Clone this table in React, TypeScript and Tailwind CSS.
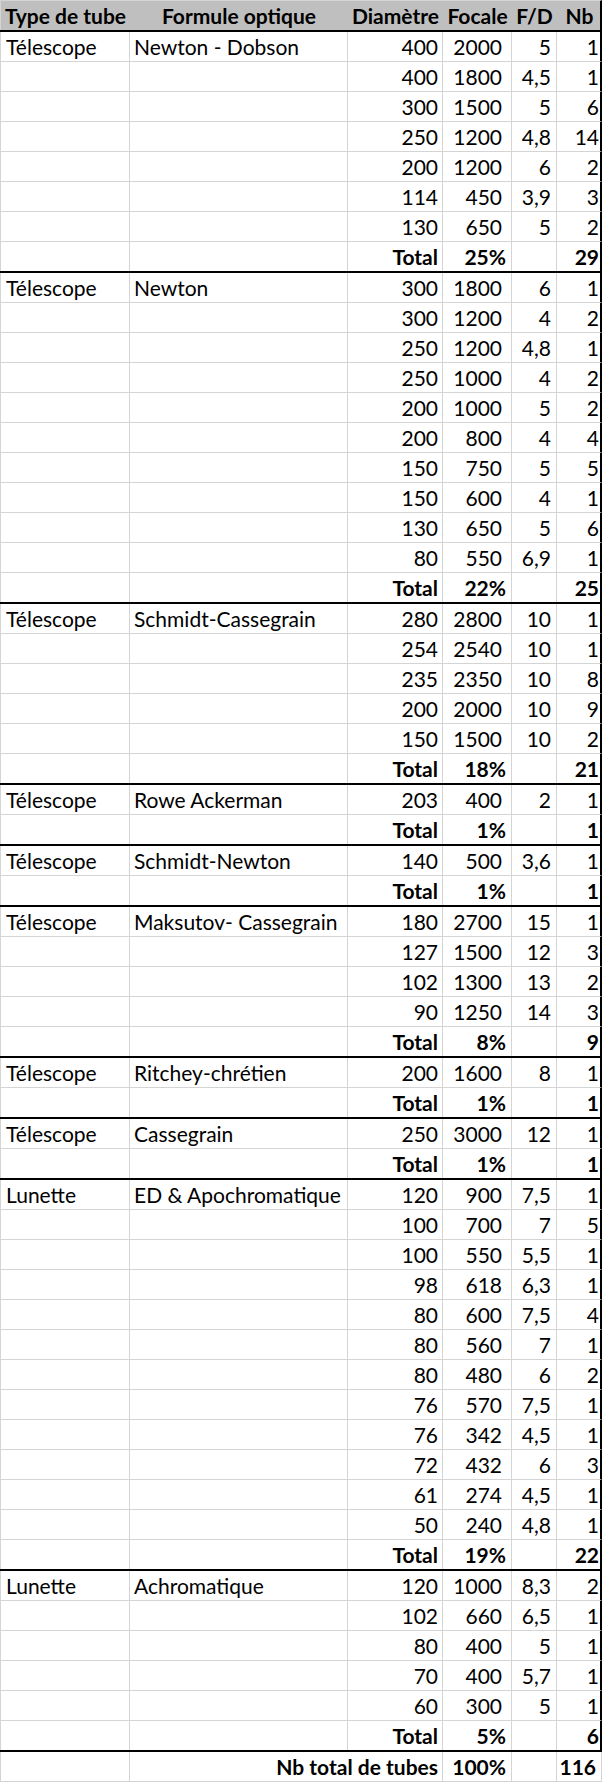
import React from "react";

type Row = [string, string, string, string];
type Group = { type: string; formule: string; rows: Row[]; total: [string, string] };

const groups: Group[] = [
  {
    type: "Télescope",
    formule: "Newton - Dobson",
    rows: [
      ["400", "2000", "5", "1"],
      ["400", "1800", "4,5", "1"],
      ["300", "1500", "5", "6"],
      ["250", "1200", "4,8", "14"],
      ["200", "1200", "6", "2"],
      ["114", "450", "3,9", "3"],
      ["130", "650", "5", "2"],
    ],
    total: ["25%", "29"],
  },
  {
    type: "Télescope",
    formule: "Newton",
    rows: [
      ["300", "1800", "6", "1"],
      ["300", "1200", "4", "2"],
      ["250", "1200", "4,8", "1"],
      ["250", "1000", "4", "2"],
      ["200", "1000", "5", "2"],
      ["200", "800", "4", "4"],
      ["150", "750", "5", "5"],
      ["150", "600", "4", "1"],
      ["130", "650", "5", "6"],
      ["80", "550", "6,9", "1"],
    ],
    total: ["22%", "25"],
  },
  {
    type: "Télescope",
    formule: "Schmidt-Cassegrain",
    rows: [
      ["280", "2800", "10", "1"],
      ["254", "2540", "10", "1"],
      ["235", "2350", "10", "8"],
      ["200", "2000", "10", "9"],
      ["150", "1500", "10", "2"],
    ],
    total: ["18%", "21"],
  },
  {
    type: "Télescope",
    formule: "Rowe Ackerman",
    rows: [["203", "400", "2", "1"]],
    total: ["1%", "1"],
  },
  {
    type: "Télescope",
    formule: "Schmidt-Newton",
    rows: [["140", "500", "3,6", "1"]],
    total: ["1%", "1"],
  },
  {
    type: "Télescope",
    formule: "Maksutov- Cassegrain",
    rows: [
      ["180", "2700", "15", "1"],
      ["127", "1500", "12", "3"],
      ["102", "1300", "13", "2"],
      ["90", "1250", "14", "3"],
    ],
    total: ["8%", "9"],
  },
  {
    type: "Télescope",
    formule: "Ritchey-chrétien",
    rows: [["200", "1600", "8", "1"]],
    total: ["1%", "1"],
  },
  {
    type: "Télescope",
    formule: "Cassegrain",
    rows: [["250", "3000", "12", "1"]],
    total: ["1%", "1"],
  },
  {
    type: "Lunette",
    formule: "ED & Apochromatique",
    rows: [
      ["120", "900", "7,5", "1"],
      ["100", "700", "7", "5"],
      ["100", "550", "5,5", "1"],
      ["98", "618", "6,3", "1"],
      ["80", "600", "7,5", "4"],
      ["80", "560", "7", "1"],
      ["80", "480", "6", "2"],
      ["76", "570", "7,5", "1"],
      ["76", "342", "4,5", "1"],
      ["72", "432", "6", "3"],
      ["61", "274", "4,5", "1"],
      ["50", "240", "4,8", "1"],
    ],
    total: ["19%", "22"],
  },
  {
    type: "Lunette",
    formule: "Achromatique",
    rows: [
      ["120", "1000", "8,3", "2"],
      ["102", "660", "6,5", "1"],
      ["80", "400", "5", "1"],
      ["70", "400", "5,7", "1"],
      ["60", "300", "5", "1"],
    ],
    total: ["5%", "6"],
  },
];

const cols = "grid grid-cols-[130px_218px_95px_69px_45px_45px]";
const cell = "flex items-center border-r border-[#d4d4d4] overflow-visible whitespace-nowrap";

function DataRow({ a, b, c, d, e, f, bold, last }: {
  a?: string; b?: string; c?: string; d?: string; e?: string; f?: string; bold?: boolean; last?: boolean;
}) {
  return (
    <div
      className={`${cols} border-r-2 border-r-black ${
        last ? "h-[31px] border-b-2 border-b-black" : "h-[30px] border-b border-b-[#d4d4d4]"
      } ${bold ? "font-bold" : ""}`}
    >
      <div className={`${cell} border-l pl-[5px]`}>{a}</div>
      <div className={`${cell} pl-[4px]`}>{b}</div>
      <div className={`${cell} justify-end pr-[4px]`}>{c}</div>
      <div className={`${cell} justify-end ${bold ? "pr-[5px]" : "pr-[9px]"}`}>{d}</div>
      <div className={`${cell} justify-end pr-[5px]`}>{e}</div>
      <div className="flex items-center justify-end pr-[3px]">{f}</div>
    </div>
  );
}

export default function App() {
  return (
    <div className="w-[602px] bg-white text-black text-[21px] leading-none font-['Lato',sans-serif]">
      {/* header */}
      <div className={`${cols} h-[32px] border-t border-t-[#d4d4d4] border-b-2 border-b-black border-r-2 border-r-black bg-[#bfbfbf] font-bold`}>
        <div className="flex items-center justify-center border-l border-[#d4d4d4]">Type de tube</div>
        <div className="flex items-center justify-center">Formule optique</div>
        <div className="flex items-center justify-center">Diamètre</div>
        <div className="flex items-center justify-center">Focale</div>
        <div className="flex items-center justify-center">F/D</div>
        <div className="flex items-center justify-center">Nb</div>
      </div>

      {groups.map((g, gi) => (
        <div key={gi}>
          {g.rows.map((r, ri) => (
            <DataRow
              key={ri}
              a={ri === 0 ? g.type : ""}
              b={ri === 0 ? g.formule : ""}
              c={r[0]}
              d={r[1]}
              e={r[2]}
              f={r[3]}
            />
          ))}
          <DataRow c="Total" d={g.total[0]} f={g.total[1]} bold last />
        </div>
      ))}

      {/* grand total */}
      <div className={`${cols} h-[30px] border-b border-b-[#d4d4d4] font-bold`}>
        <div className={`${cell} border-l`} />
        <div className="col-span-2 flex items-center justify-end border-r border-[#d4d4d4] pr-[4px]">
          Nb total de tubes
        </div>
        <div className={`${cell} justify-end pr-[5px]`}>100%</div>
        <div className={cell} />
        <div className="flex items-center justify-end border-r border-[#d4d4d4] pr-[5px]">116</div>
      </div>
    </div>
  );
}
